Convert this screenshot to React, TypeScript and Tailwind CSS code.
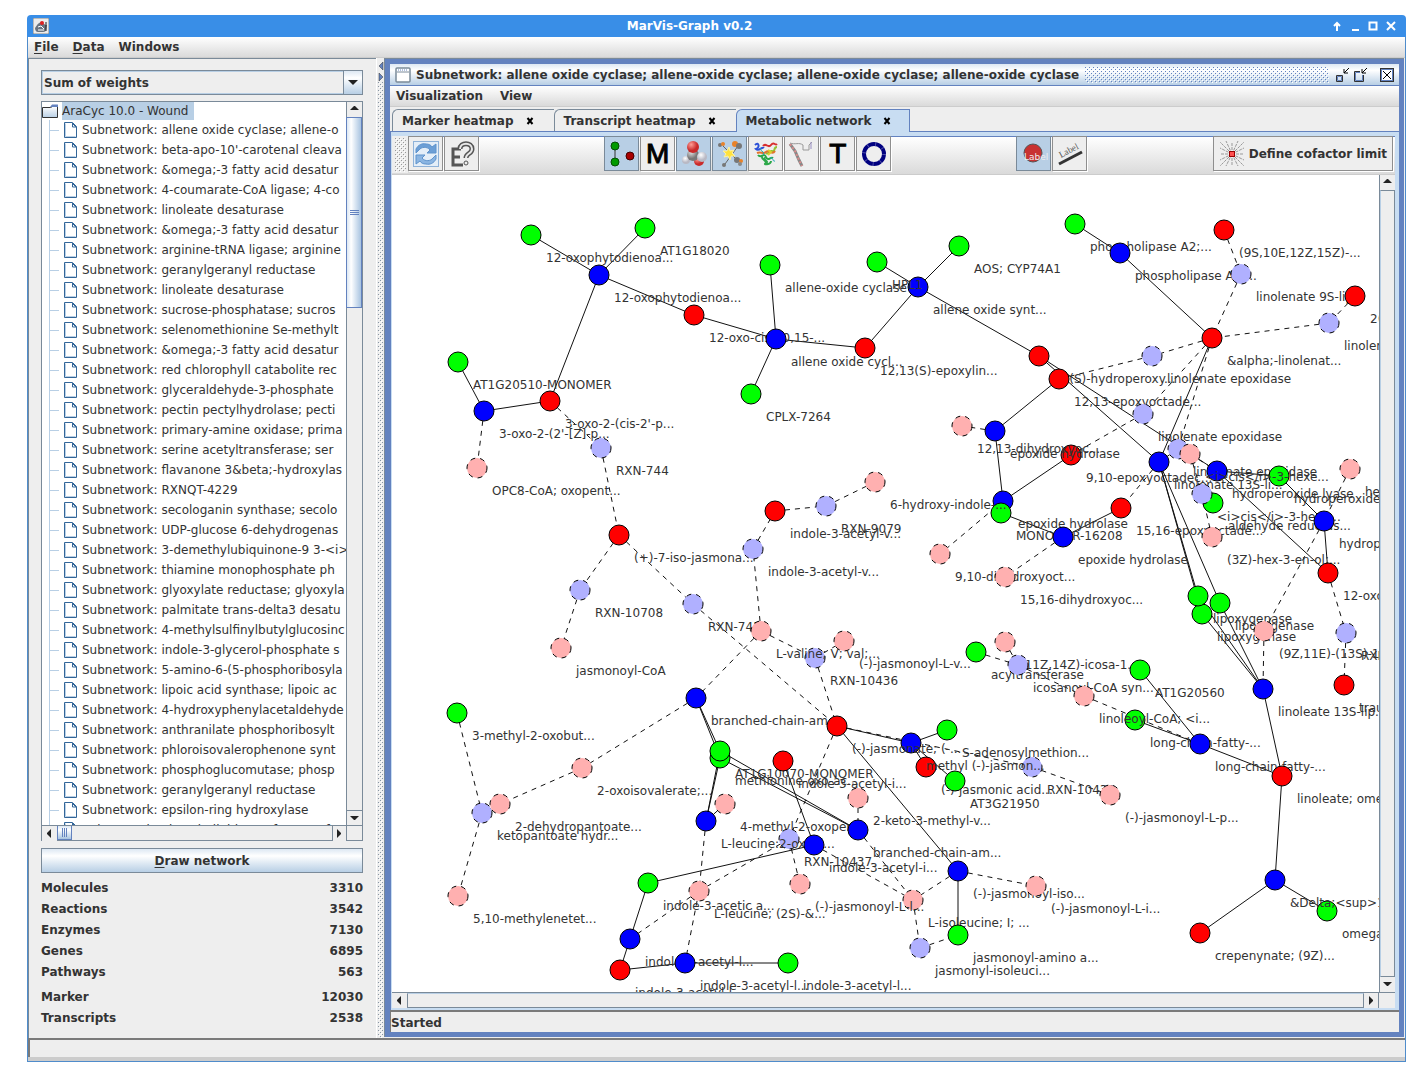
import React, { useState } from "react";

type Kind = "G" | "B" | "R" | "P" | "L";
type GraphNode = [id: number, kind: Kind, x: number, y: number, label: string];

const FILL: Record<Kind, string> = {
  G: "#00ff00",
  B: "#0000ff",
  R: "#ff0000",
  P: "#ffb0b0",
  L: "#b0b0ff",
};

/* Painted in this order, so later nodes cover earlier labels. */
const NODES: GraphNode[] = [
  [1, "G", 531, 235, "12-oxophytodienoa..."],
  [2, "G", 645, 228, "AT1G18020"],
  [3, "B", 599, 275, "12-oxophytodienoa..."],
  [4, "R", 694, 315, "12-oxo-cis-10,15-..."],
  [5, "G", 770, 265, "allene-oxide cyclase"],
  [6, "B", 776, 339, "allene oxide cycl..."],
  [7, "G", 751, 394, "CPLX-7264"],
  [8, "R", 865, 348, "12,13(S)-epoxylin..."],
  [11, "B", 918, 287, "allene oxide synt..."],
  [9, "G", 877, 262, "HPL1"],
  [10, "G", 959, 246, "AOS; CYP74A1"],
  [12, "G", 458, 362, "AT1G20510-MONOMER"],
  [13, "B", 484, 411, "3-oxo-2-(2'-[Z]-p..."],
  [14, "R", 550, 401, "3-oxo-2-(cis-2'-p..."],
  [15, "L", 601, 448, "RXN-744"],
  [16, "P", 477, 468, "OPC8-CoA; oxopent..."],
  [17, "R", 619, 535, "(+)-7-iso-jasmona..."],
  [18, "L", 580, 590, "RXN-10708"],
  [19, "P", 561, 648, "jasmonoyl-CoA"],
  [20, "L", 693, 604, "RXN-745"],
  [22, "L", 815, 658, "RXN-10436"],
  [21, "P", 761, 631, "L-valine; V; val;..."],
  [23, "P", 844, 641, "(-)-jasmonoyl-L-v..."],
  [24, "L", 753, 549, "indole-3-acetyl-v..."],
  [25, "R", 775, 511, "indole-3-acetyl-v..."],
  [26, "L", 826, 506, "RXN-9079"],
  [28, "B", 696, 698, "branched-chain-am..."],
  [34, "L", 1032, 767, "RXN-10438"],
  [35, "P", 1110, 795, "(-)-jasmonoyl-L-p..."],
  [32, "R", 926, 767, "(-)-jasmonic acid..."],
  [30, "B", 911, 743, "methyl (-)-jasmon..."],
  [29, "R", 837, 726, "(-)-jasmonate; (-..."],
  [31, "G", 947, 730, "S-adenosylmethion..."],
  [33, "G", 955, 781, "AT3G21950"],
  [36, "G", 457, 713, "3-methyl-2-oxobut..."],
  [37, "P", 582, 768, "2-oxoisovalerate;..."],
  [39, "L", 482, 813, "ketopantoate hydr..."],
  [38, "P", 500, 804, "2-dehydropantoate..."],
  [40, "P", 458, 896, "5,10-methylenetet..."],
  [41, "G", 720, 758, "methionine-oxo-ac..."],
  [42, "G", 720, 751, "AT1G10070-MONOMER"],
  [43, "R", 783, 761, "indole-3-acetyl-i..."],
  [44, "P", 725, 804, "4-methyl-2-oxopen..."],
  [46, "L", 789, 839, "RXN-10437"],
  [45, "B", 706, 821, "L-leucine:2-oxogl..."],
  [47, "B", 814, 845, "indole-3-acetyl-i..."],
  [48, "P", 858, 798, "2-keto-3-methyl-v..."],
  [49, "B", 858, 830, "branched-chain-am..."],
  [50, "B", 958, 871, "(-)-jasmonoyl-iso..."],
  [51, "P", 1036, 886, "(-)-jasmonoyl-L-i..."],
  [52, "P", 913, 900, "L-isoleucine; I; ..."],
  [53, "P", 800, 884, "(-)-jasmonoyl-L-l..."],
  [54, "G", 648, 883, "indole-3-acetic a..."],
  [55, "P", 699, 891, "L-leucine; (2S)-&..."],
  [56, "B", 630, 939, "indole-3-acetyl-l..."],
  [57, "R", 620, 970, "indole-3-acetyl-l..."],
  [58, "B", 685, 963, "indole-3-acetyl-l..."],
  [59, "G", 788, 963, "indole-3-acetyl-l..."],
  [60, "L", 920, 948, "jasmonyl-isoleuci..."],
  [61, "G", 958, 935, "jasmonoyl-amino a..."],
  [62, "G", 1075, 224, "phospholipase A2;..."],
  [63, "B", 1120, 253, "phospholipase A2;..."],
  [64, "R", 1224, 230, "(9S,10E,12Z,15Z)-..."],
  [65, "L", 1241, 274, "linolenate 9S-lip..."],
  [66, "R", 1355, 296, "2(R)-hydroperoxy..."],
  [67, "L", 1329, 323, "linolenate &alpha..."],
  [68, "R", 1212, 338, "&alpha;-linolenat..."],
  [69, "L", 1152, 356, "linolenate epoxidase"],
  [70, "R", 1039, 356, "13(S)-hydroperoxy..."],
  [71, "R", 1059, 379, "12,13-epoxyoctade..."],
  [83, "R", 1071, 455, "9,10-epoxyoctadec..."],
  [72, "L", 1143, 414, "linolenate epoxidase"],
  [73, "L", 1178, 449, "linolenate epoxidase"],
  [75, "B", 1159, 462, "linolenate 13S-li..."],
  [76, "B", 1217, 471, "hydroperoxide lyase"],
  [77, "G", 1279, 476, "hydroperoxide lyase"],
  [74, "P", 1190, 454, "<i>cis</i>-3-hexe..."],
  [78, "P", 1350, 469, "hexenal"],
  [80, "G", 1213, 503, "aldehyde reductas..."],
  [79, "L", 1202, 494, "<i>cis</i>-3-hexe..."],
  [82, "R", 1121, 508, "15,16-epoxyoctade..."],
  [81, "P", 1212, 537, "(3Z)-hex-3-en-ol;..."],
  [88, "P", 962, 426, "12,13-dihydroxyoc..."],
  [87, "B", 995, 431, "epoxide hydrolase"],
  [86, "B", 1003, 501, "epoxide hydrolase"],
  [85, "G", 1001, 513, "MONOMER-16208"],
  [84, "B", 1063, 537, "epoxide hydrolase"],
  [27, "P", 875, 482, "6-hydroxy-indole-..."],
  [89, "P", 940, 554, "9,10-dihydroxyoct..."],
  [90, "P", 1005, 577, "15,16-dihydroxyoc..."],
  [91, "B", 1324, 521, "hydroperoxide lyase"],
  [92, "R", 1328, 573, "12-oxo-9-dodecen..."],
  [95, "G", 1202, 614, "lipoxygenase"],
  [93, "G", 1198, 596, "lipoxygenase"],
  [94, "G", 1220, 603, "lipoxygenase"],
  [96, "P", 1264, 631, "(9Z,11E)-(13S)-13..."],
  [97, "L", 1346, 633, "RXN-1321"],
  [98, "R", 1344, 685, "traumatin"],
  [99, "B", 1263, 689, "linoleate 13S-lip..."],
  [100, "P", 1005, 642, "(11Z,14Z)-icosa-1..."],
  [101, "G", 976, 652, "acyltransferase"],
  [102, "L", 1018, 665, "icosanoyl-CoA syn..."],
  [104, "G", 1140, 670, "AT1G20560"],
  [105, "G", 1135, 720, "long-chain-fatty-..."],
  [103, "P", 1084, 696, "linoleoyl-CoA; <i..."],
  [106, "B", 1200, 744, "long-chain-fatty-..."],
  [107, "R", 1282, 776, "linoleate; omega-6"],
  [110, "G", 1327, 911, "omega-6 desat..."],
  [108, "B", 1275, 880, "&Delta;<sup>12</s..."],
  [109, "R", 1200, 933, "crepenynate; (9Z)..."],
];

const SOLID: [number, number][] = [
  [1, 3], [2, 3], [3, 4], [3, 14], [12, 13], [13, 14], [4, 6], [5, 6], [6, 7], [6, 8],
  [8, 11], [9, 11], [10, 11], [11, 70], [28, 41], [28, 42], [42, 45], [41, 45], [42, 49],
  [41, 49], [43, 47], [29, 30], [30, 31], [30, 32], [30, 33], [29, 50], [47, 54], [50, 61],
  [54, 56], [56, 57], [57, 58], [58, 59], [62, 63], [63, 68], [68, 75], [70, 75], [70, 76],
  [71, 87], [87, 86], [86, 83], [85, 84], [84, 82], [75, 93], [75, 95], [75, 94], [93, 99],
  [95, 99], [94, 99], [91, 77], [91, 92], [92, 76], [77, 76], [99, 107], [107, 106],
  [106, 104], [106, 105], [107, 108], [108, 109], [108, 110],
];

const DASHED: [number, number][] = [
  [13, 16], [14, 15], [15, 17], [17, 18], [18, 19], [17, 20], [20, 29], [21, 24], [24, 25],
  [25, 26], [26, 27], [21, 22], [22, 23], [22, 29], [21, 28], [28, 37], [37, 38], [38, 39],
  [36, 39], [39, 40], [29, 34], [34, 35], [29, 46], [44, 45], [45, 55], [46, 55], [46, 53],
  [47, 52], [48, 49], [49, 52], [50, 52], [50, 51], [52, 60], [60, 61], [55, 56], [55, 58],
  [64, 65], [65, 68], [66, 67], [67, 68], [68, 69], [69, 71], [68, 72], [72, 83], [68, 73],
  [73, 75], [87, 88], [84, 90], [86, 89], [75, 82], [74, 79], [74, 76], [79, 81], [96, 99],
  [91, 96], [78, 91], [92, 97], [97, 98], [103, 106], [102, 103], [100, 102], [101, 102],
];

const AT = new Map(NODES.map(([id, , x, y]) => [id, { x, y }]));

function Edge({ pair, dashed }: { pair: [number, number]; dashed?: boolean }) {
  const a = AT.get(pair[0])!;
  const b = AT.get(pair[1])!;
  return (
    <line x1={a.x} y1={a.y} x2={b.x} y2={b.y} stroke="#111" strokeDasharray={dashed ? "5 5" : undefined} />
  );
}

function NetworkGraph() {
  return (
    <svg role="img" aria-label="Metabolic network" className="block h-full w-full bg-white text-xs">
      <g transform="translate(-392 -175)">
        {SOLID.map((p) => (
          <Edge key={p.join()} pair={p} />
        ))}
        {DASHED.map((p) => (
          <Edge key={p.join()} pair={p} dashed />
        ))}
        {NODES.map(([id, kind, x, y, label]) => (
          <g key={id}>
            <circle
              cx={x}
              cy={y}
              r="10"
              fill={FILL[kind]}
              stroke="#000"
              strokeDasharray={kind === "P" || kind === "L" ? "5 5" : undefined}
            />
            <text x={x + 15} y={y + 27} fill="#333">
              {label}
            </text>
          </g>
        ))}
      </g>
    </svg>
  );
}

const TREE = [
  "allene oxide cyclase; allene-o",
  "beta-apo-10'-carotenal cleava",
  "&omega;-3 fatty acid desatur",
  "4-coumarate-CoA ligase; 4-co",
  "linoleate desaturase",
  "&omega;-3 fatty acid desatur",
  "arginine-tRNA ligase; arginine",
  "geranylgeranyl reductase",
  "linoleate desaturase",
  "sucrose-phosphatase; sucros",
  "selenomethionine Se-methylt",
  "&omega;-3 fatty acid desatur",
  "red chlorophyll catabolite rec",
  "glyceraldehyde-3-phosphate ",
  "pectin pectylhydrolase; pecti",
  "primary-amine oxidase; prima",
  "serine acetyltransferase; ser",
  "flavanone 3&beta;-hydroxylas",
  "RXNQT-4229",
  "secologanin synthase; secolo",
  "UDP-glucose 6-dehydrogenas",
  "3-demethylubiquinone-9 3-<i>",
  "thiamine monophosphate ph",
  "glyoxylate reductase; glyoxyla",
  "palmitate trans-delta3 desatu",
  "4-methylsulfinylbutylglucosinc",
  "indole-3-glycerol-phosphate s",
  "5-amino-6-(5-phosphoribosyla",
  "lipoic acid synthase; lipoic ac",
  "4-hydroxyphenylacetaldehyde",
  "anthranilate phosphoribosylt",
  "phloroisovalerophenone synt",
  "phosphoglucomutase; phosp",
  "geranylgeranyl reductase",
  "epsilon-ring hydroxylase",
  "phospholipid transferase; of",
];

const STATS: [string, number][] = [
  ["Molecules", 3310],
  ["Reactions", 3542],
  ["Enzymes", 7130],
  ["Genes", 6895],
  ["Pathways", 563],
];
const MARKER_STATS: [string, number][] = [
  ["Marker", 12030],
  ["Transcripts", 2538],
];

function Bumps({ id, color, className }: { id: string; color: string; className: string }) {
  return (
    <svg aria-hidden="true" className={className} shapeRendering="crispEdges">
      <defs>
        <pattern id={id} width="4" height="4" patternUnits="userSpaceOnUse">
          <rect width="1" height="1" fill={color} />
          <rect x="2" y="2" width="1" height="1" fill={color} />
          <rect x="1" y="1" width="1" height="1" fill="#fff" />
          <rect x="3" y="3" width="1" height="1" fill="#fff" />
        </pattern>
      </defs>
      <rect width="100%" height="100%" fill={`url(#${id})`} />
    </svg>
  );
}

const ARROWS = {
  up: "M0 5h9L5 1H4z",
  down: "M0 2h9L5 6H4z",
  left: "M6 0v9L2 5V4z",
  right: "M2 0v9l4-4V4z",
};

function ScrollButton({ dir, label, className }: { dir: keyof typeof ARROWS; label: string; className?: string }) {
  return (
    <button
      type="button"
      aria-label={label}
      className={`flex size-[15px] shrink-0 items-center justify-center bg-[#eee] ${className ?? ""}`}
    >
      <svg width="9" height="9" viewBox="0 0 9 9" fill="#222">
        <path d={ARROWS[dir]} />
      </svg>
    </button>
  );
}

function FileIcon() {
  return (
    <svg width="14" height="16" viewBox="0 0 14 16" className="shrink-0" fill="none">
      <path d="M.5.5h8l4 4v11H.5z" fill="#fff" stroke="#336699" />
      <path d="M1.500 1.500v13h10" stroke="#b8cfe5" />
      <path d="M7.500.5l5 5M8.500 1v4h4" stroke="#336699" />
    </svg>
  );
}

function FolderIcon() {
  return (
    <svg width="18" height="16" viewBox="0 0 18 16" className="shrink-0">
      <defs>
        <linearGradient id="folder" x1="0" y1="0" x2="0" y2="1">
          <stop offset="0" stopColor="#fff" />
          <stop offset="1" stopColor="#b8cfe5" />
        </linearGradient>
      </defs>
      <path d="M.5 14.500v-10h8l2-1h5v11z" fill="url(#folder)" stroke="#333" />
      <path d="M8 4l2-2.500h6V4z" fill="#6382bf" />
    </svg>
  );
}

function StatRows({ rows }: { rows: [string, number][] }) {
  return (
    <>
      {rows.map(([name, value]) => (
        <div key={name} className="flex h-[21px] items-center justify-between">
          <dt>{name}</dt>
          <dd>{value}</dd>
        </div>
      ))}
    </>
  );
}

function Sidebar() {
  return (
    <aside className="flex w-[348px] shrink-0 flex-col border-t border-l border-[#7a8a99] px-3 pt-[11px] pb-[10px]">
      <div className="relative mr-px h-[25px] shrink-0 border border-[#7a8a99] bg-[#eee]">
        <select
          aria-label="Ranking"
          className="h-full w-full appearance-none border border-[#b8cfe5] pl-px font-bold outline-none"
        >
          <option>Sum of weights</option>
        </select>
        <span className="pointer-events-none absolute inset-y-0 right-0 flex w-[19px] items-center justify-center border-l border-[#7a8a99] bg-linear-to-b from-[#dde8f3] via-white via-30% to-[#b8cfe5]">
          <svg width="10" height="5" viewBox="0 0 10 5">
            <path d="M0 0h10L5 5z" fill="#222" />
          </svg>
        </span>
      </div>

      <div className="mt-[6px] mr-px flex min-h-0 flex-1 flex-col border border-[#7a8a99] bg-white">
        <div className="flex min-h-0 flex-1">
          <div className="min-w-0 flex-1 overflow-hidden whitespace-nowrap" role="tree" aria-label="Subnetworks">
            <div role="treeitem" aria-selected="true" className="flex h-[18px] items-center gap-[2px]">
              <FolderIcon />
              <span className="bg-[#b8cfe5] pr-[6px] leading-[18px]">AraCyc 10.0 - Wound</span>
            </div>
            <ul className="ml-[7px] border-l border-[#b8cfe5]">
              {TREE.map((name, i) => (
                <li key={i} role="treeitem" aria-selected="false" className="flex h-5 items-center">
                  <span className="mr-[5px] h-px w-[9px] shrink-0 bg-[#b8cfe5]" />
                  <FileIcon />
                  <span className="ml-1">Subnetwork: {name}</span>
                </li>
              ))}
            </ul>
          </div>
          <div className="flex w-4 shrink-0 flex-col border-l border-[#7a8a99] bg-[#eee]">
            <ScrollButton dir="up" label="Scroll tree up" />
            <div className="-ml-px flex h-[191px] items-center justify-center border border-[#6382bf] bg-linear-to-r from-[#dde8f3] via-white via-30% to-[#a9c4e0]">
              <span className="h-[5px] w-[9px] border-y border-[#6382bf]">
                <span className="mt-px block h-px bg-[#6382bf]" />
              </span>
            </div>
            <div className="flex-1" />
            <ScrollButton dir="down" label="Scroll tree down" className="border-t border-[#7a8a99]" />
          </div>
        </div>
        <div className="flex h-[15px] shrink-0 border-t border-[#7a8a99] bg-[#eee]">
          <ScrollButton dir="left" label="Scroll tree left" />
          <div className="flex w-[15px] items-center justify-center border border-t-0 border-[#6382bf] bg-linear-to-b from-[#dde8f3] via-white via-30% to-[#a9c4e0]">
            <span className="h-[9px] w-[5px] border-x border-[#6382bf]">
              <span className="mx-auto block h-full w-px bg-[#6382bf]" />
            </span>
          </div>
          <div className="flex-1" />
          <ScrollButton dir="right" label="Scroll tree right" className="border-x border-[#7a8a99]" />
          <div className="w-[15px]" />
        </div>
      </div>

      <button
        type="button"
        className="mt-[7px] mr-px h-[25px] shrink-0 border border-[#7a8a99] bg-linear-to-b from-[#dde8f3] via-white via-30% to-[#b8cfe5] font-bold"
      >
        <u className="underline-offset-2">D</u>raw network
      </button>

      <dl className="mt-1 mr-px shrink-0 font-bold">
        <StatRows rows={STATS} />
        <div className="h-1" />
        <StatRows rows={MARKER_STATS} />
      </dl>
    </aside>
  );
}

const TABS = ["Marker heatmap", "Transcript heatmap", "Metabolic network"];

function TabStrip() {
  const [active, setActive] = useState(2);
  return (
    <div role="tablist" className="flex h-6 shrink-0 items-end pl-[2px]">
      {TABS.map((name, i) => (
        <div
          key={name}
          className={
            i === active
              ? "relative z-10 -mb-px flex h-[23px] items-center rounded-tl-md border border-b-0 border-[#6382bf] bg-[#c8ddf2] pr-[14px] pl-[9px]"
              : "flex h-[22px] items-center rounded-tl-md border border-r-0 border-b-0 border-[#7a8a99] bg-[#eee] pr-4 pl-[9px]"
          }
        >
          <button type="button" role="tab" aria-selected={i === active} onClick={() => setActive(i)} className="font-bold">
            {name}
          </button>
          <button type="button" aria-label={`Close ${name}`} className="ml-2 flex size-4 items-center justify-center">
            <svg width="8" height="8" viewBox="0 0 8 8">
              <path d="M1.500 1l5 6M6.500 1l-5 6" stroke="#000" strokeWidth="2" />
            </svg>
          </button>
        </div>
      ))}
    </div>
  );
}

const RefreshIcon = (
  <svg width="28" height="28" viewBox="0 0 28 28">
    <rect x="1.500" y="1.500" width="25" height="25" fill="#e4eef8" stroke="#8fb2d8" />
    <path d="M4 13V9c2-4 6-6 10-5 3 0 5 1 6 3l4-3v9h-9l3-3c-3-4-9-3-11 0z" fill="#6c9fd6" stroke="#5f93cc" />
    <path d="M24 15v4c-2 4-6 6-10 5-3 0-5-1-6-3l-4 3v-9h9l-3 3c3 4 9 3 11 0z" fill="#8bb5e2" stroke="#5f93cc" />
  </svg>
);
const HelpIcon = (
  <svg width="28" height="28" viewBox="0 0 28 28" fill="none">
    <path d="M13 9H5v16h10M5 17h7" stroke="#555" strokeWidth="3" />
    <path d="M12 9c0-7 12-7 12 0 0 5-6 4-6 9" stroke="#555" strokeWidth="5" />
    <path d="M12 9c0-7 12-7 12 0 0 5-6 4-6 9" stroke="#e8e8e8" strokeWidth="2" />
    <circle cx="18" cy="23" r="2" fill="#eee" stroke="#555" strokeWidth="1" />
  </svg>
);
const NodesIcon = (
  <svg width="28" height="28" viewBox="0 0 28 28">
    <path d="M7 6v17" stroke="#333" />
    <circle cx="7" cy="6" r="4" fill="#009a00" stroke="#044d04" />
    <circle cx="7" cy="22" r="4" fill="#009a00" stroke="#044d04" />
    <circle cx="22" cy="16" r="4" fill="#a80000" stroke="#400" />
  </svg>
);
const MoleculeIcon = (
  <svg width="28" height="28" viewBox="0 0 28 28">
    <defs>
      <radialGradient id="ballRed" cx=".35" cy=".3">
        <stop offset="0" stopColor="#ff9d95" />
        <stop offset="1" stopColor="#c92a2a" />
      </radialGradient>
      <radialGradient id="ballGray" cx=".35" cy=".3">
        <stop offset="0" stopColor="#ddd" />
        <stop offset="1" stopColor="#777" />
      </radialGradient>
      <radialGradient id="ballWhite" cx=".4" cy=".3">
        <stop offset="0" stopColor="#fff" />
        <stop offset="1" stopColor="#b9b9c4" />
      </radialGradient>
    </defs>
    <circle cx="6" cy="20" r="4" fill="url(#ballWhite)" />
    <circle cx="19" cy="21" r="5" fill="url(#ballRed)" />
    <circle cx="13" cy="15" r="6" fill="url(#ballGray)" />
    <circle cx="13" cy="7" r="6" fill="url(#ballRed)" />
    <circle cx="22" cy="17" r="5" fill="url(#ballWhite)" />
  </svg>
);
const ReactionIcon = (
  <svg width="28" height="28" viewBox="0 0 28 28">
    <path d="M7 6l15 15M22 6L9 24" stroke="#666" />
    <circle cx="4" cy="5" r="2" fill="#777" />
    <circle cx="7" cy="4" r="2" fill="#e8822a" />
    <circle cx="19" cy="4" r="3" fill="#e8822a" />
    <circle cx="23" cy="6" r="3" fill="#777" />
    <circle cx="8" cy="25" r="2" fill="#777" />
    <circle cx="21" cy="20" r="3" fill="#777" />
    <circle cx="25" cy="21" r="2" fill="#e8822a" />
    <circle cx="24" cy="24" r="2" fill="#888" />
    <path d="M13 7l1 4 4-1-2 3 3 3-4 0-1 4-2-4-4 1 2-3-3-3 4 0z" fill="#ffe23c" stroke="#fff3a0" />
  </svg>
);
const ProteinIcon = (
  <svg width="28" height="28" viewBox="0 0 28 28" fill="none" strokeWidth="2">
    <path d="M3 5c4-4 5 3 1 4 3 3 6-3 8-1" stroke="#2b50d8" />
    <path d="M11 6c3-4 5 3 8-1s4 1 6-1" stroke="#d82f2f" />
    <path d="M25 7c-4 0-1 5-5 4s-2 4-6 2" stroke="#93c234" />
    <path d="M5 13c4-2 6 2 9-1s6 4 9-1" stroke="#e2732c" />
    <path d="M6 15c3 4 6-3 8 2s5-1 7 1" stroke="#28a745" />
    <path d="M14 17c-5 3 4 4 0 6s5 2 5-2M10 16c-1 5 5 2 4 9" stroke="#2ea84a" />
    <path d="M9 8c-3 3 5 3 2 7M18 18c4-1 2 4 5 3" stroke="#1fa7b5" strokeWidth="1" />
    <path d="M16 10l3 2-3 3" stroke="#d8d12b" />
  </svg>
);
const ChainIcon = (
  <svg width="28" height="28" viewBox="0 0 28 28" fill="none">
    <path d="M2 4l5 7 4 9 3 6" stroke="#888" strokeWidth="3" />
    <path d="M2 4l5 7 4 9 3 6" stroke="#d98b8b" strokeWidth="2" strokeDasharray="2 2" />
    <path d="M2 3c5 2 9-1 13 2v5l6 0V5l3-3" stroke="#999" />
    <path d="M23 2v7" stroke="#9a8fc4" />
  </svg>
);
const LetterIcon = (letter: string) => (
  <span className="font-['Liberation_Sans'] text-[28px] leading-none font-normal text-black [-webkit-text-stroke:1px_black]">
    {letter}
  </span>
);
const RingIcon = (
  <svg width="28" height="28" viewBox="0 0 28 28" fill="none">
    <circle cx="14" cy="14" r="10" stroke="#000080" strokeWidth="4" />
    <circle cx="14" cy="14" r="10" stroke="#fff" strokeWidth="4" strokeDasharray="1 7" opacity=".3" />
  </svg>
);
const NodeLabelIcon = (
  <svg width="28" height="28" viewBox="0 0 28 28">
    <circle cx="13" cy="13" r="9" fill="#c83232" stroke="#555" />
    <text x="4" y="20" fontSize="9" fill="#eee">
      Label
    </text>
  </svg>
);
const EdgeLabelIcon = (
  <svg width="28" height="28" viewBox="0 0 28 28">
    <path d="M3 24L26 12" stroke="#333" strokeWidth="3" />
    <text x="5" y="18" fontSize="9" fill="#555" fontFamily="Liberation Serif" transform="rotate(-28 5 18)">
      Label
    </text>
  </svg>
);
const CofactorIcon = (
  <svg width="26" height="26" viewBox="0 0 26 26">
    <path
      d="M13 13L1 1M13 13L7 0M13 13V1M13 13l6-13M13 13L25 1M13 13l12-6M13 13h12M13 13l12 6M13 13l12 12M13 13l6 12M13 13v12M13 13L7 25M13 13L1 25M13 13L1 19M13 13H1M13 13L1 7"
      stroke="#999"
      strokeDasharray="3 1"
    />
    <rect x="10.500" y="10.500" width="5" height="5" fill="#ff5050" stroke="#900" />
  </svg>
);

function ToolButton({ label, on, children }: { label: string; on?: boolean; children: React.ReactNode }) {
  return (
    <button
      type="button"
      aria-label={label}
      title={label}
      aria-pressed={on}
      className={
        on
          ? "flex size-[35px] shrink-0 items-center justify-center border border-[#7a8a99] bg-[#b8cfe5]"
          : "flex size-[35px] shrink-0 items-center justify-center border border-[#8e8e8e] bg-[#eee] shadow-[1px_1px_0_#fff]"
      }
    >
      {children}
    </button>
  );
}

function Toolbar() {
  return (
    <div
      role="toolbar"
      className="mt-1 flex h-[39px] shrink-0 items-start border-t border-b border-t-[#6382bf] border-b-[#ccc] bg-linear-to-b from-white to-[#dadada] pr-[2px]"
    >
      <div className="-mt-px flex h-[37px] w-4 shrink-0 items-center bg-[#eee] pl-[3px]">
        <Bumps id="grip" color="#999" className="h-[34px] w-[11px]" />
      </div>
      <div className="-mt-px flex gap-px">
        <ToolButton label="Refresh">{RefreshIcon}</ToolButton>
        <ToolButton label="Explain">{HelpIcon}</ToolButton>
      </div>
      <div className="flex-1" />
      <div className="-mt-px flex gap-px">
        <ToolButton label="Show genes and enzymes" on>{NodesIcon}</ToolButton>
        <ToolButton label="Show markers">{LetterIcon("M")}</ToolButton>
        <ToolButton label="Show molecules" on>{MoleculeIcon}</ToolButton>
        <ToolButton label="Show reactions" on>{ReactionIcon}</ToolButton>
        <ToolButton label="Show enzymes">{ProteinIcon}</ToolButton>
        <ToolButton label="Show genes">{ChainIcon}</ToolButton>
        <ToolButton label="Show transcripts">{LetterIcon("T")}</ToolButton>
        <ToolButton label="Show pathways">{RingIcon}</ToolButton>
      </div>
      <div className="flex-1" />
      <div className="-mt-px flex gap-px">
        <ToolButton label="Node labels" on>{NodeLabelIcon}</ToolButton>
        <ToolButton label="Edge labels">{EdgeLabelIcon}</ToolButton>
      </div>
      <div className="flex-1" />
      <button
        type="button"
        className="-mt-px flex h-[35px] shrink-0 items-center gap-1 border border-[#8e8e8e] bg-[#eee] px-[5px] font-bold whitespace-nowrap shadow-[1px_1px_0_#fff]"
      >
        {CofactorIcon}
        Define cofactor limit
      </button>
    </div>
  );
}

function SubnetworkWindow() {
  return (
    <main className="mr-px mb-px flex min-w-0 flex-1 flex-col border-t border-l border-[#7a8a99] bg-[#6382bf] p-[5px]">
      <div className="flex min-h-0 flex-1 flex-col bg-[#eee]">
        <header className="flex h-[22px] shrink-0 items-center border-b border-[#6382bf] bg-linear-to-b from-[#dde8f3] via-white via-30% to-[#b8cfe5] px-[5px]">
          <svg width="16" height="16" viewBox="0 0 16 16" className="mr-[5px] shrink-0">
            <rect x="1" y="1" width="14" height="14" rx="1" fill="#fff" stroke="#7a8a99" strokeWidth="1.500" />
            <path d="M2 5h12" stroke="#7a8a99" />
            <path d="M3 3h10" stroke="#6382bf" strokeDasharray="1 1" />
          </svg>
          <h2 className="truncate font-bold">
            Subnetwork: allene oxide cyclase; allene-oxide cyclase; allene-oxide cyclase; allene-oxide cyclase
          </h2>
          <Bumps id="title" color="#6382bf" className="mx-[6px] h-4 min-w-0 flex-1" />
          <button type="button" aria-label="Iconify" className="mr-1">
            <svg width="14" height="16" viewBox="0 0 14 16" fill="none">
              <path d="M1.500 8.500h6v6h-6z" stroke="#333" />
              <path d="M2.500 9.500h4v4h-4z" stroke="#6382bf" />
              <path d="M14 1L9 6M9 2v4h4" stroke="#000" />
            </svg>
          </button>
          <button type="button" aria-label="Restore" className="mr-3">
            <svg width="15" height="16" viewBox="0 0 15 16" fill="none">
              <path d="M7 4.500H1.500v10h9V8" stroke="#333" />
              <path d="M7 5.500H2.500v8h7V8" stroke="#6382bf" />
              <path d="M14 1L9 6M9 2v4h4" stroke="#000" />
            </svg>
          </button>
          <button type="button" aria-label="Close subnetwork">
            <svg width="14" height="14" viewBox="0 0 14 14" fill="none">
              <rect x=".5" y=".5" width="13" height="13" fill="#fff" stroke="#333" />
              <rect x="1.500" y="1.500" width="11" height="11" stroke="#6382bf" />
              <path d="M3 3l8 8M11 3l-8 8" stroke="#000" />
            </svg>
          </button>
        </header>

        <nav className="flex h-[21px] shrink-0 items-center gap-[17px] border-b border-[#ccc] bg-linear-to-b from-white to-[#dadada] px-[6px] pb-px">
          <button type="button" className="font-bold">Visualization</button>
          <button type="button" className="font-bold">View</button>
        </nav>

        <TabStrip />

        <section className="flex min-h-0 flex-1 flex-col border-t border-l border-[#6382bf] bg-[#c8ddf2] pr-1 pb-[2px] pl-px">
          <Toolbar />
          <div className="flex min-h-0 flex-1">
            <div className="min-w-0 flex-1 overflow-hidden">
              <NetworkGraph />
            </div>
            <div className="flex w-4 shrink-0 flex-col border-x border-[#7a8a99] bg-[#eee]">
              <ScrollButton dir="up" label="Scroll graph up" />
              <div className="flex-1 border-y border-l border-[#7a8a99] border-l-[#b8cfe5]" />
              <ScrollButton dir="down" label="Scroll graph down" />
            </div>
          </div>
          <div className="flex h-4 shrink-0 bg-[#eee]">
            <div className="flex flex-1 border-y border-[#7a8a99]">
              <ScrollButton dir="left" label="Scroll graph left" />
              <div className="flex-1 border-x border-t border-x-[#7a8a99] border-t-[#b8cfe5]" />
              <ScrollButton dir="right" label="Scroll graph right" className="border-r border-[#7a8a99]" />
            </div>
            <div className="w-4 border-t border-[#7a8a99]" />
          </div>
        </section>

        <footer className="flex h-[22px] shrink-0 items-center border-t-2 border-l border-[#7a7a7a] pt-px font-bold">
          Started
        </footer>
      </div>
    </main>
  );
}

function TitleBar() {
  return (
    <header className="flex h-[22px] shrink-0 items-center rounded-t-sm bg-[#398ee7] pr-2 pl-[6px] text-white">
      <svg width="16" height="16" viewBox="0 0 16 16">
        <rect width="16" height="16" rx="1" fill="#ececec" stroke="#888" />
        <path d="M2 10c2-3 3-5 6-6 3 1 3 3 6 3-1 4 0 7-4 7H5c-2 0-3-2-3-4z" fill="#6a7480" />
        <path d="M5 9l3-1 3 3M5 12h6" stroke="#fff" fill="none" />
        <path d="M13 4v9" stroke="#222" />
        <circle cx="9" cy="5" r="2" fill="#e02020" />
      </svg>
      <h1 className="flex-1 text-center font-bold">MarVis-Graph v0.2</h1>
      <div className="flex justify-end gap-1">
        {[
          ["Shade", "M7 12V4M4 7l3-3 3 3"],
          ["Minimize", "M4 11h7"],
          ["Maximize", "M3.500 3.500h7v7h-7z"],
          ["Close", "M3 3l8 8M11 3l-8 8"],
        ].map(([label, d]) => (
          <button key={label} type="button" aria-label={label}>
            <svg width="14" height="14" viewBox="0 0 14 14" fill="none" stroke="#fff" strokeWidth="2">
              <path d={d} />
            </svg>
          </button>
        ))}
      </div>
    </header>
  );
}

export default function App() {
  return (
    <div className="flex h-screen flex-col bg-white pt-[15px] pr-5 pb-[19px] pl-[27px] font-['DejaVu_Sans',sans-serif] text-xs text-[#333]">
      <div className="flex min-h-0 flex-1 flex-col">
        <TitleBar />
        <div className="flex min-h-0 flex-1 flex-col border-x border-b border-[#4f8ccb] bg-[#eee]">
          <nav className="flex h-[21px] shrink-0 items-center gap-[14px] border-b border-[#ccc] bg-linear-to-b from-white to-[#dadada] px-[6px] pb-px">
            <button type="button" className="font-bold"><u className="underline-offset-2">F</u>ile</button>
            <button type="button" className="font-bold"><u className="underline-offset-2">D</u>ata</button>
            <button type="button" className="font-bold">Windows</button>
          </nav>
          <div className="flex min-h-0 flex-1">
            <Sidebar />
            <div className="flex w-2 shrink-0 flex-col items-center border-l border-white pt-1">
              <svg width="6" height="20" viewBox="0 0 6 20" className="shrink-0">
                <path d="M5 0v8L1 4z" fill="#6382bf" stroke="#333" strokeWidth=".5" />
                <path d="M1 11v8l4-4z" fill="#6382bf" stroke="#333" strokeWidth=".5" />
              </svg>
              <Bumps id="divider" color="#8795a4" className="min-h-0 w-[5px] flex-1" />
            </div>
            <SubnetworkWindow />
          </div>
          <footer className="h-[23px] shrink-0 border-b-4 border-[#ccc]">
            <div className="h-full border-t-2 border-l-2 border-t-[#7a7a7a] border-l-[#7a7a7a]" />
          </footer>
        </div>
      </div>
    </div>
  );
}
